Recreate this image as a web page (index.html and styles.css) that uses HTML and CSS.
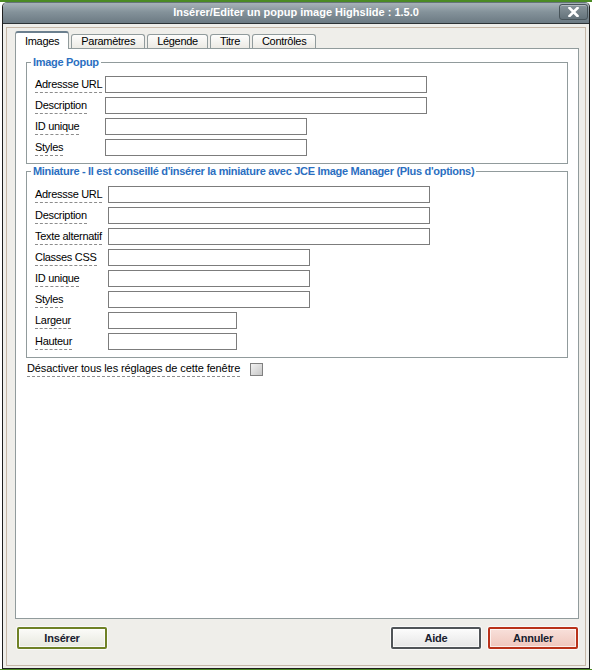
FILE: index.html
```html
<!DOCTYPE html>
<html lang="fr">
<head>
    <meta charset="UTF-8">
    <meta name="viewport" content="width=device-width, initial-scale=1.0">
    <title>Highslide popup</title>
    <link rel="stylesheet" href="styles.css">
</head>
<body>
    <div class="dialog">
        <div class="titlebar">
            <span></span>
            <span class="title">Insérer/Editer un popup image Highslide : 1.5.0</span>
            <button class="close" title="Fermer">
                <svg width="11" height="10" viewBox="0 0 11 10">
                    <path d="M1.5 1 L9.5 9 M9.5 1 L1.5 9" stroke="#fff" stroke-width="2.6" stroke-linecap="square"/>
                </svg>
            </button>
        </div>

        <div class="frame">
            <div class="inner">
                <div class="tabs">
                    <span class="tab active">Images</span>
                    <span class="tab">Paramètres</span>
                    <span class="tab">Légende</span>
                    <span class="tab">Titre</span>
                    <span class="tab">Contrôles</span>
                </div>

                <div class="panel">
                    <fieldset class="group">
                        <legend>Image Popup</legend>
                        <div class="fields">
                            <label>Adressse URL</label>
                            <input type="text" class="wide">
                            <label>Description</label>
                            <input type="text" class="wide">
                            <label>ID unique</label>
                            <input type="text" class="mid">
                            <label>Styles</label>
                            <input type="text" class="mid">
                        </div>
                    </fieldset>

                    <fieldset class="group">
                        <legend>Miniature - Il est conseillé d'insérer la miniature avec JCE Image Manager (Plus d'options)</legend>
                        <div class="fields fields-thumb">
                            <label>Adressse URL</label>
                            <input type="text" class="wide">
                            <label>Description</label>
                            <input type="text" class="wide">
                            <label>Texte alternatif</label>
                            <input type="text" class="wide">
                            <label>Classes CSS</label>
                            <input type="text" class="mid">
                            <label>ID unique</label>
                            <input type="text" class="mid">
                            <label>Styles</label>
                            <input type="text" class="mid">
                            <label>Largeur</label>
                            <input type="text" class="small">
                            <label>Hauteur</label>
                            <input type="text" class="small">
                        </div>
                    </fieldset>

                    <div class="disable-row">
                        <label>Désactiver tous les réglages de cette fenêtre</label>
                        <input type="checkbox" class="check">
                    </div>
                </div>

                <div class="actions">
                    <button class="btn btn-insert">Insérer</button>
                    <span class="spacer"></span>
                    <button class="btn btn-help">Aide</button>
                    <button class="btn btn-cancel">Annuler</button>
                </div>
            </div>
        </div>
    </div>
</body>
</html>
```

FILE: styles.css
```css
* {
    box-sizing: border-box;
}

body {
    margin: 0;
    background: linear-gradient(#4b8a24 0, #4b8a24 2px, #fff 2px);
    font-family: 'Liberation Sans', Arial, sans-serif;
    font-size: 11px;
    letter-spacing: -0.3px;
    color: #000;
}

.dialog {
    width: 588px;
    height: 667px;
    margin: 2px 0 0 2px;
    display: flex;
    flex-direction: column;
    border: 1px solid #1e1e1e;
    border-top-color: #66737a;
    border-radius: 5px 5px 0 0;
    background: #efeeea;
    overflow: hidden;
}

/* title bar */
.titlebar {
    height: 21px;
    display: grid;
    grid-template-columns: 32px 1fr 32px;
    align-items: start;
    background: linear-gradient(#a7b2b8, #84929a 45%, #6c7a83);
    border-bottom: 1px solid #2c3236;
}

.title {
    text-align: center;
    color: #fff;
    font-size: 11px;
    font-weight: bold;
    letter-spacing: 0;
    line-height: 19px;
}

.close {
    justify-self: end;
    margin: 1px 1px 0 0;
    width: 29px;
    height: 16px;
    padding: 0;
    display: flex;
    align-items: center;
    justify-content: center;
    border: 1px solid #48545a;
    border-radius: 3px;
    background: linear-gradient(#89959c, #64727a);
    box-shadow: inset 0 1px 0 rgba(255, 255, 255, 0.35);
}

/* body */
.frame {
    flex: 1;
    display: flex;
    padding: 3px 3px 2px 3px;
}

.inner {
    flex: 1;
    display: flex;
    flex-direction: column;
    border: 1px solid #c6b8a9;
    padding: 3px 6px 16px 8px;
}

/* tabs */
.tabs {
    height: 17px;
    display: flex;
    align-items: flex-end;
    gap: 2px;
}

.tab {
    position: relative;
    height: 14px;
    padding: 0 9px;
    line-height: 12px;
    border: 1px solid #919b9c;
    border-bottom: none;
    border-radius: 3px 3px 0 0;
    background: linear-gradient(#fdfdfc, #eceae4);
}

.tab.active {
    z-index: 1;
    height: 18px;
    margin-bottom: -1px;
    padding-top: 2px;
    border-top: 2px solid #6b7f8e;
    background: #fff;
}

.panel {
    flex: 1;
    padding: 7px 10px 0;
    border: 1px solid #919b9c;
    background: #fff;
}

/* field groups */
.group {
    margin: 0;
    padding: 7px 8px 7px;
    border: 1px solid #919b9c;
}

.group + .group {
    margin-top: 1px;
    padding-top: 8px;
}

.group legend {
    margin-left: -4px;
    padding: 0 2px;
    line-height: 13px;
    color: #2b6fc1;
    font-weight: bold;
}

.fields {
    display: grid;
    grid-template-columns: 70px max-content;
    row-gap: 4px;
    align-items: center;
}

.fields-thumb {
    grid-template-columns: 73px max-content;
}

label {
    justify-self: start;
    line-height: 13px;
    padding-bottom: 1px;
    border-bottom: 1px dashed #8d8d8d;
}

.fields label {
    align-self: end;
}

input[type="text"] {
    height: 17px;
    margin: 0;
    padding: 0 2px;
    border: 1px solid #7c7c7c;
    background: #fff;
    font: inherit;
}

.wide {
    width: 322px;
}

.mid {
    width: 202px;
}

.small {
    width: 129px;
}

.disable-row {
    display: flex;
    align-items: center;
    gap: 10px;
    margin: 4px 0 0 1px;
}

.disable-row label {
    letter-spacing: -0.1px;
}

.check {
    appearance: none;
    width: 13px;
    height: 13px;
    margin: 0;
    border: 1px solid #808080;
    background: linear-gradient(135deg, #f2f2f2, #c6c6c6);
}

/* bottom buttons */
.actions {
    display: flex;
    gap: 7px;
    margin: 8px 1px 0 2px;
}

.spacer {
    flex: 1;
}

.btn {
    width: 90px;
    height: 22px;
    padding: 0;
    border: 2px solid;
    border-radius: 2px;
    box-shadow: 0 0 0 1px #fafafa, inset 0 0 0 1px rgba(255, 255, 255, 0.7);
    font-family: inherit;
    font-size: 11px;
    font-weight: bold;
    letter-spacing: -0.2px;
    color: #18202e;
}

.btn-insert {
    border-color: #6f8126;
    background: linear-gradient(#fbfbf8, #e7e8df);
}

.btn-help {
    border-color: #505458;
    background: linear-gradient(#fcfcfc, #e6e6e6);
}

.btn-cancel {
    border-color: #b9321a;
    background: linear-gradient(#f8e0da, #efc6bd);
}
```
